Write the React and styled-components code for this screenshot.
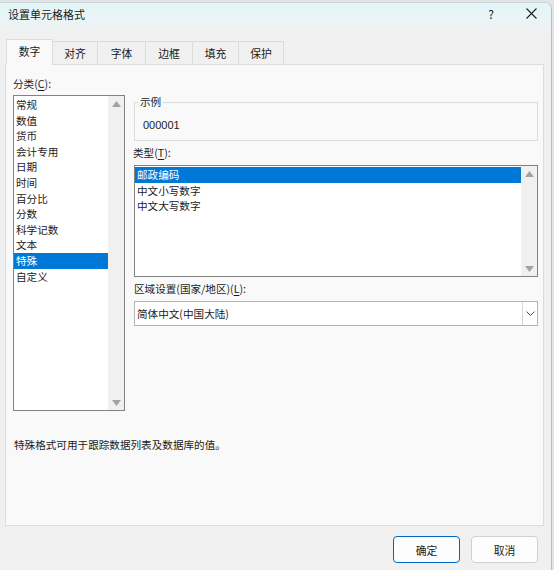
import React from "react";
import styled, { createGlobalStyle } from "styled-components";

const Global = createGlobalStyle`
  html, body { margin: 0; padding: 0; background: #e4e4e4; }
  body {
    font-family: "Noto Sans CJK SC", "Noto Sans", sans-serif;
    font-size: 10.6px;
    color: #1b1b1b;
  }
  * { box-sizing: border-box; }
`;

const Window = styled.div`
  margin-top: 2px;
  width: 552px;
  height: 568px;
  background: #f0f0f0;
  border-right: 1px solid #bcbcbc;
  border-top: 1px solid #c8d8da;
  border-top-right-radius: 7px;
  overflow: hidden;
  display: flex;
  flex-direction: column;
`;

const TitleBar = styled.div`
  height: 28px;
  flex: none;
  display: flex;
  align-items: center;
  padding: 0 0 7px 8px;
  background: linear-gradient(180deg, #e3f5f6 0%, #eaf5f6 60%, #f0f0f0 100%);
  font-size: 11px;
`;

const Title = styled.div`
  flex: 1;
`;

const TitleButton = styled.div`
  width: 40px;
  display: flex;
  justify-content: center;
  align-items: center;
  font-size: 12px;
  color: #222;
`;

const Body = styled.div`
  padding: 8px 7px 0 5px;
  display: flex;
  flex-direction: column;
`;

const TabStrip = styled.div`
  display: flex;
  align-items: flex-end;
  height: 26px;
  padding-left: 1px;
  position: relative;
  z-index: 1;
  margin-bottom: -1px;
`;

const Tab = styled.div`
  width: ${(p) => p.$w}px;
  height: ${(p) => (p.$active ? 26 : 24)}px;
  display: flex;
  align-items: center;
  justify-content: center;
  padding-bottom: ${(p) => (p.$active ? 3 : 1)}px;
  background: ${(p) => (p.$active ? "#f9f9f9" : "#f0f0f0")};
  border: 1px solid #dcdcdc;
  border-bottom: ${(p) => (p.$active ? "1px solid #f9f9f9" : "1px solid #dcdcdc")};
  margin-left: ${(p) => (p.$first ? 0 : -1)}px;
  font-size: 10.8px;
`;

const Panel = styled.div`
  height: 462px;
  background: #f9f9f9;
  border: 1px solid #dcdcdc;
  display: flex;
  flex-direction: column;
  padding: 12px 7px 0 7px;
`;

const Columns = styled.div`
  display: grid;
  grid-template-columns: 112px 404px;
  column-gap: 9px;
`;

const LeftCol = styled.div`
  display: flex;
  flex-direction: column;
`;

const RightCol = styled.div`
  display: flex;
  flex-direction: column;
  padding-top: 25px;
`;

const Label = styled.div`
  height: ${(p) => p.$h || 16}px;
  line-height: 14px;
  margin-left: ${(p) => p.$indent || 0}px;
  u { text-decoration: underline; text-underline-offset: 2px; }
`;

const ListBox = styled.div`
  height: ${(p) => p.$h}px;
  border: 1px solid #828282;
  background: #fff;
  display: flex;
`;

const ListItems = styled.div`
  flex: 1;
  padding-top: 1px;
`;

const Item = styled.div`
  height: 15.6px;
  line-height: 15.6px;
  padding-left: 2px;
  white-space: nowrap;
  background: ${(p) => (p.$sel ? "#0078d7" : "transparent")};
  color: ${(p) => (p.$sel ? "#fff" : "#1b1b1b")};
`;

const ScrollTrack = styled.div`
  width: 16px;
  flex: none;
  background: #f0f0f0;
  display: flex;
  flex-direction: column;
  justify-content: space-between;
  align-items: center;
  padding: 5px 0 4px;
`;

const Arrow = ({ down }) => (
  <svg width="9" height="6" viewBox="0 0 9 6">
    <polygon points={down ? "0,0 9,0 4.5,6" : "0,6 9,6 4.5,0"} fill="#a3a3a3" />
  </svg>
);

const Scrollbar = () => (
  <ScrollTrack>
    <Arrow />
    <Arrow down />
  </ScrollTrack>
);

/* framed "sample" box; its caption sits on top of the frame line */
const GroupBox = styled.div`
  position: relative;
  height: 39px;
  border: 1px solid #dcdcdc;
  padding: 7px 0 0 8px;
  display: flex;
  align-items: center;
`;

const GroupCaption = styled.span`
  position: absolute;
  left: 3px;
  top: -8px;
  padding: 0 2px;
  line-height: 14px;
  background: #f9f9f9;
`;

const SampleValue = styled.div`
  font-family: "Liberation Sans", "Noto Sans", sans-serif;
  font-size: 11px;
`;

const Select = styled.div`
  height: 25px;
  border: 1px solid #b4b4b4;
  background: #fff;
  display: flex;
  align-items: stretch;
`;

const SelectValue = styled.div`
  flex: 1;
  display: flex;
  align-items: center;
  padding-left: 2px;
`;

const SelectButton = styled.div`
  width: 15px;
  border-left: 1px solid #d6d6d6;
  display: flex;
  align-items: center;
  justify-content: center;
`;

const Description = styled.div`
  margin-top: 26px;
  padding-left: 1px;
`;

const Footer = styled.div`
  display: flex;
  justify-content: flex-end;
  gap: 11px;
  padding: 10px 6px 0 0;
`;

const Button = styled.div`
  width: 67px;
  height: 27px;
  border-radius: 4px;
  display: flex;
  align-items: center;
  justify-content: center;
  background: #fdfdfd;
  border: ${(p) => (p.$primary ? "1.5px solid #0067c0" : "1px solid #d0d0d0")};
  font-size: 10.8px;
`;

const tabs = [
  ["数字", 47],
  ["对齐", 46],
  ["字体", 49],
  ["边框", 48],
  ["填充", 47],
  ["保护", 46],
];

const categories = ["常规", "数值", "货币", "会计专用", "日期", "时间", "百分比", "分数", "科学记数", "文本", "特殊", "自定义"];
const types = ["邮政编码", "中文小写数字", "中文大写数字"];

export default function App() {
  return (
    <>
      <Global />
      <Window>
        <TitleBar>
          <Title>设置单元格格式</Title>
          <TitleButton>?</TitleButton>
          <TitleButton>
            <svg width="11" height="11" viewBox="0 0 11 11">
              <path d="M0.5 0.5 L10.5 10.5 M10.5 0.5 L0.5 10.5" stroke="#222" strokeWidth="1.1" />
            </svg>
          </TitleButton>
        </TitleBar>
        <Body>
          <TabStrip>
            {tabs.map(([t, w], i) => (
              <Tab key={t} $w={w} $active={i === 0} $first={i === 0}>
                {t}
              </Tab>
            ))}
          </TabStrip>
          <Panel>
            <Columns>
              <LeftCol>
                <Label $h={18}>
                  分类(<u>C</u>):
                </Label>
                <ListBox $h={316}>
                  <ListItems>
                    {categories.map((c) => (
                      <Item key={c} $sel={c === "特殊"}>
                        {c}
                      </Item>
                    ))}
                  </ListItems>
                  <Scrollbar />
                </ListBox>
              </LeftCol>
              <RightCol>
                <GroupBox>
                  <GroupCaption>示例</GroupCaption>
                  <SampleValue>000001</SampleValue>
                </GroupBox>
                <Label $h={19} style={{ marginTop: 5 }} $indent={-1}>
                  类型(<u>T</u>):
                </Label>
                <ListBox $h={112}>
                  <ListItems>
                    {types.map((t) => (
                      <Item key={t} $sel={t === "邮政编码"}>
                        {t}
                      </Item>
                    ))}
                  </ListItems>
                  <Scrollbar />
                </ListBox>
                <Label $h={24} style={{ paddingTop: 5 }}>
                  区域设置(国家/地区)(<u>L</u>):
                </Label>
                <Select>
                  <SelectValue>简体中文(中国大陆)</SelectValue>
                  <SelectButton>
                    <svg width="9" height="5" viewBox="0 0 9 5">
                      <path d="M0.5 0.5 L4.5 4.5 L8.5 0.5" fill="none" stroke="#555" strokeWidth="1" />
                    </svg>
                  </SelectButton>
                </Select>
              </RightCol>
            </Columns>
            <Description>特殊格式可用于跟踪数据列表及数据库的值。</Description>
          </Panel>
          <Footer>
            <Button $primary>确定</Button>
            <Button>取消</Button>
          </Footer>
        </Body>
      </Window>
    </>
  );
}
